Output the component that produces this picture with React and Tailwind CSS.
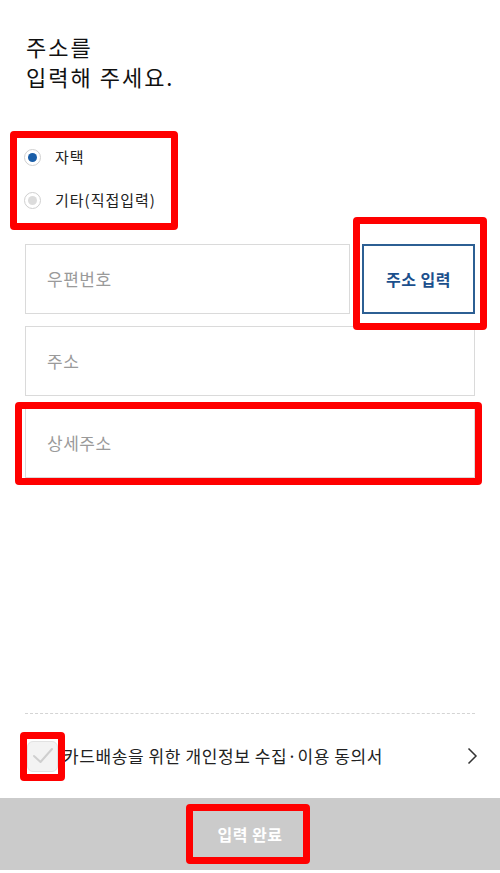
import React from "react";

const font = { fontFamily: '"Noto Sans CJK KR", "Noto Sans", sans-serif' };

function Radio({ checked, label }) {
  return (
    <div className="flex items-center h-[43px]">
      <span className="w-[17px] h-[17px] rounded-full border border-[#cfcfcf] bg-white flex items-center justify-center">
        <span className={"w-[9px] h-[9px] rounded-full " + (checked ? "bg-[#1a5ea8]" : "bg-[#dcdcdc]")} />
      </span>
      <span className="ml-[14px] text-[15px] tracking-[1px] text-[#222]">{label}</span>
    </div>
  );
}

function Field({ placeholder, className = "" }) {
  return (
    <div className={"h-[70px] border border-[#dadada] bg-white flex items-center pl-[21px] " + className}>
      <span className="text-[17px] tracking-[0.5px] text-[#9a9a9a]">{placeholder}</span>
    </div>
  );
}

export default function App() {
  return (
    <div className="relative w-[500px] h-[873px] bg-white flex flex-col overflow-hidden" style={font}>
      <div className="pt-[31px] px-[26px] text-[22px] leading-[30px] tracking-[2px] text-[#111]">
        <div>주소를</div>
        <div>입력해 주세요.</div>
      </div>

      <div className="mt-[45px] px-[24px]">
        <Radio checked label="자택" />
        <Radio label="기타(직접입력)" />
      </div>

      <div className="mt-[22px] px-[25px] flex flex-col gap-[12px]">
        <div className="flex gap-[12px]">
          <Field placeholder="우편번호" className="flex-1" />
          <button className="w-[113px] h-[70px] border-2 border-[#2c5f93] bg-white text-[16px] tracking-[0.5px] font-bold text-[#1b4f8c]">
            주소 입력
          </button>
        </div>
        <Field placeholder="주소" />
        <Field placeholder="상세주소" />
      </div>

      <div className="flex-1" />

      <div className="mx-[25px] border-t border-dashed border-[#d4d4d4]" />
      <div className="h-[84px] flex items-center pl-[27px] pr-[22px]">
        <span className="w-[31px] h-[31px] rounded-[6px] border border-[#e2e2e2] bg-[#f3f3f3] flex items-center justify-center">
          <svg width="22" height="18" viewBox="0 0 22 18" fill="none">
            <path d="M2 9 L8.5 15 L20 2" stroke="#cfcfcf" strokeWidth="2" strokeLinecap="round" strokeLinejoin="round" />
          </svg>
        </span>
        <span className="ml-[5px] text-[17px] tracking-[0.6px] text-[#222] flex-1">카드배송을 위한 개인정보 수집·이용 동의서</span>
        <svg width="11" height="18" viewBox="0 0 11 18" fill="none">
          <path d="M1.5 1.5 L9 9 L1.5 16.5" stroke="#333" strokeWidth="1.5" />
        </svg>
      </div>
      <div className="h-[72px] bg-[#cbcbcb] flex items-center justify-center">
        <span className="text-[16px] tracking-[0.5px] font-bold text-white">입력 완료</span>
      </div>
      <div className="h-[3px]" />

      {/* annotation overlays */}
      <div className="absolute left-[10px] top-[131px] w-[168px] h-[99px] border-[7px] border-[#ff0000] rounded-[4px] pointer-events-none" />
      <div className="absolute left-[353px] top-[217px] w-[134px] h-[113px] border-[7px] border-[#ff0000] rounded-[4px] pointer-events-none" />
      <div className="absolute left-[15px] top-[402px] w-[467px] h-[83px] border-[7px] border-[#ff0000] rounded-[4px] pointer-events-none" />
      <div className="absolute left-[20px] top-[732px] w-[45px] h-[49px] border-[7px] border-[#ff0000] rounded-[4px] pointer-events-none" />
      <div className="absolute left-[186px] top-[804px] w-[124px] h-[60px] border-[7px] border-[#ff0000] rounded-[4px] pointer-events-none" />
    </div>
  );
}
